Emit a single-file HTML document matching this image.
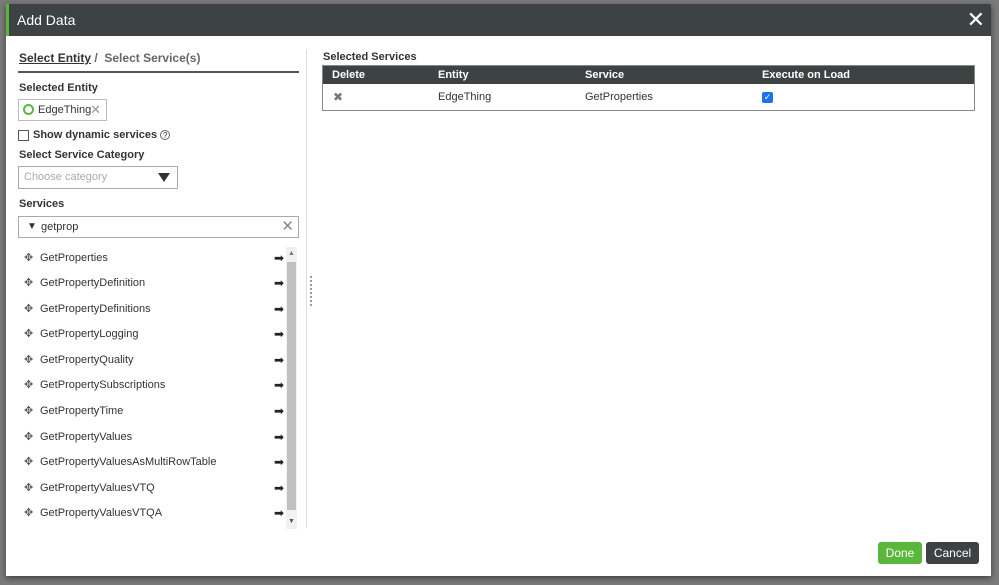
<!DOCTYPE html>
<html><head><style>
*{box-sizing:border-box;margin:0;padding:0}
body{width:999px;height:585px;background:#7a7a7a;font-family:"Liberation Sans",Arial,sans-serif;position:relative;overflow:hidden;font-size:12px;color:#333}
.modal{position:absolute;left:6px;top:4px;width:985px;height:572px;background:#fff;box-shadow:0 2px 6px rgba(0,0,0,.5)}
.hdr{position:absolute;left:0;top:0;width:985px;height:32px;background:#3d4343;border-left:3px solid #5bb73b;color:#fff;font-size:14px;line-height:32px;padding-left:8px}
.close{position:absolute;right:6px;top:0;font-size:22px;color:#fff;line-height:32px}
.abs{position:absolute}
.row{position:absolute;left:18px;width:260px;height:20px;font-size:11px;line-height:20px;color:#333}
.row .mv{position:absolute;left:0;top:0;color:#555;font-size:11px}
.row .nm{position:absolute;left:16px}
.row .ar{position:absolute;right:0;top:0;font-size:12px;color:#222}
</style></head><body>
<div class="modal">
<div class="hdr">Add Data<span class="close">✕</span></div>
<div class="abs" style="left:13px;top:47px;font-size:12px;font-weight:bold;color:#333;white-space:nowrap"><span style="text-decoration:underline">Select Entity</span> <span style="color:#666"> / &nbsp;Select Service(s)</span></div>
<div class="abs" style="left:12px;top:67px;width:281px;height:2px;background:#555"></div>
<div class="abs" style="left:13px;top:78px;font-weight:bold;font-size:11px">Selected Entity</div>
<div class="abs" style="left:12px;top:95px;width:89px;height:22px;border:1px solid #bbb;font-size:11px;line-height:20px;padding-left:19px;white-space:nowrap">
<span class="abs" style="left:4px;top:4px;width:11px;height:11px;border:2px solid #5bb73b;border-radius:50%"></span>EdgeThing<span class="abs" style="right:5px;top:0;color:#999;font-size:13px">✕</span></div>
<div class="abs" style="left:12px;top:126px;width:11px;height:11px;border:1px solid #555"></div>
<div class="abs" style="left:27px;top:125px;font-weight:bold;font-size:11px;white-space:nowrap">Show dynamic services <span style="display:inline-block;width:10px;height:10px;border:1px solid #666;border-radius:50%;font-size:8px;line-height:9px;text-align:center;font-weight:normal">?</span></div>
<div class="abs" style="left:13px;top:145px;font-weight:bold;font-size:11px">Select Service Category</div>
<div class="abs" style="left:12px;top:162px;width:160px;height:23px;border:1px solid #aaa;font-size:11px;color:#aaa;line-height:20px;padding-left:5px">Choose category<span class="abs" style="right:7px;top:6px;width:0;height:0;border-left:6px solid transparent;border-right:6px solid transparent;border-top:9px solid #333"></span></div>
<div class="abs" style="left:13px;top:194px;font-weight:bold;font-size:11px">Services</div>
<div class="abs" style="left:12px;top:212px;width:281px;height:22px;border:1px solid #aaa;font-size:11px;line-height:20px;padding-left:22px">getprop<span class="abs" style="left:8px;top:0;font-size:10px">▼</span><span class="abs" style="right:4px;top:0;color:#888;font-size:15px">✕</span></div>
<div class="row" style="top:244px"><span class="mv">✥</span><span class="nm">GetProperties</span><span class="ar">➡</span></div>
<div class="row" style="top:269px"><span class="mv">✥</span><span class="nm">GetPropertyDefinition</span><span class="ar">➡</span></div>
<div class="row" style="top:295px"><span class="mv">✥</span><span class="nm">GetPropertyDefinitions</span><span class="ar">➡</span></div>
<div class="row" style="top:320px"><span class="mv">✥</span><span class="nm">GetPropertyLogging</span><span class="ar">➡</span></div>
<div class="row" style="top:346px"><span class="mv">✥</span><span class="nm">GetPropertyQuality</span><span class="ar">➡</span></div>
<div class="row" style="top:371px"><span class="mv">✥</span><span class="nm">GetPropertySubscriptions</span><span class="ar">➡</span></div>
<div class="row" style="top:397px"><span class="mv">✥</span><span class="nm">GetPropertyTime</span><span class="ar">➡</span></div>
<div class="row" style="top:423px"><span class="mv">✥</span><span class="nm">GetPropertyValues</span><span class="ar">➡</span></div>
<div class="row" style="top:448px"><span class="mv">✥</span><span class="nm">GetPropertyValuesAsMultiRowTable</span><span class="ar">➡</span></div>
<div class="row" style="top:474px"><span class="mv">✥</span><span class="nm">GetPropertyValuesVTQ</span><span class="ar">➡</span></div>
<div class="row" style="top:499px"><span class="mv">✥</span><span class="nm">GetPropertyValuesVTQA</span><span class="ar">➡</span></div>
<div class="abs" style="left:280px;top:243px;width:11px;height:282px;background:#f1f1f1"></div>
<div class="abs" style="left:281px;top:258px;width:9px;height:248px;background:#c1c1c1"></div>
<div class="abs" style="left:282px;top:246px;font-size:7px;color:#777">▲</div>
<div class="abs" style="left:282px;top:514px;font-size:7px;color:#555">▼</div>
<div class="abs" style="left:300px;top:46px;width:1px;height:478px;background:#ddd"></div>
<div class="abs" style="left:304px;top:272px;width:2px;height:30px;background:repeating-linear-gradient(#999 0 2px,transparent 2px 4px)"></div>
<div class="abs" style="left:317px;top:47px;font-weight:bold;font-size:11px">Selected Services</div>
<div class="abs" style="left:316px;top:61px;width:653px;height:46px;border:1px solid #888">
<div style="height:18px;background:#3d4343;color:#fff;font-weight:bold;font-size:11px;line-height:18px;position:relative">
<span class="abs" style="left:9px">Delete</span><span class="abs" style="left:115px">Entity</span><span class="abs" style="left:262px">Service</span><span class="abs" style="left:439px">Execute on Load</span></div>
<div style="position:relative;height:26px;font-size:11px;line-height:26px">
<span class="abs" style="left:10px;color:#777;font-size:12px">✖</span><span class="abs" style="left:115px">EdgeThing</span><span class="abs" style="left:262px">GetProperties</span>
<span class="abs" style="left:439px;top:8px;width:11px;height:11px;background:#1a73e8;border-radius:2px;color:#fff;font-size:9px;line-height:11px;text-align:center">✓</span></div>
</div>
<div class="abs" style="left:872px;top:538px;width:44px;height:22px;background:#5bb73b;border-radius:3px;color:#fff;text-align:center;line-height:22px;font-size:12px">Done</div>
<div class="abs" style="left:920px;top:538px;width:53px;height:22px;background:#3d4343;border-radius:3px;color:#fff;text-align:center;line-height:22px;font-size:12px">Cancel</div>
</div>
</body></html>
